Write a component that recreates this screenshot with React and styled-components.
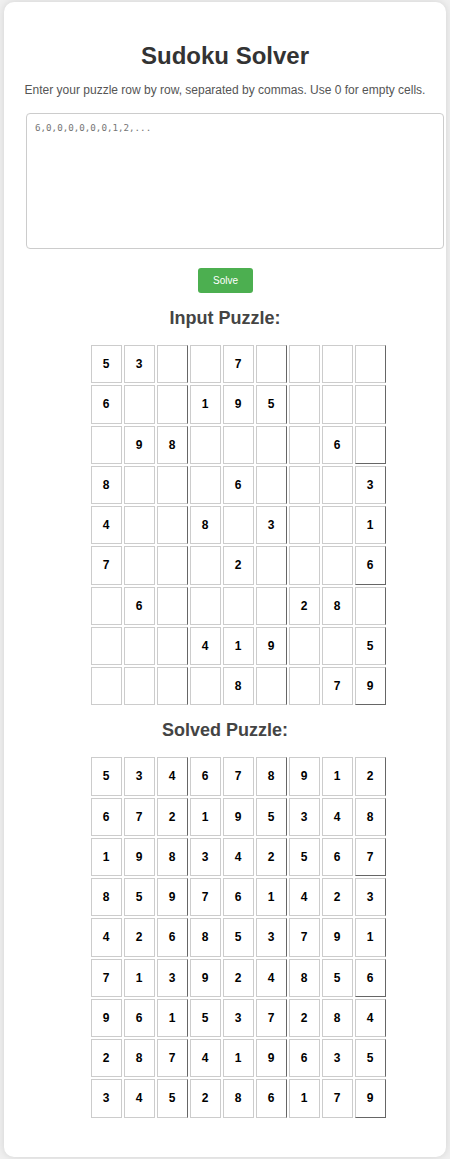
import React from "react";
import styled, { createGlobalStyle } from "styled-components";

const GlobalStyle = createGlobalStyle`
  html, body { margin: 0; padding: 0; }
  body {
    background: #f0f0f0;
    font-family: "Liberation Sans", Arial, sans-serif;
  }
`;

const Page = styled.div`
  padding: 2px 0 3px;
`;

const Card = styled.div`
  box-sizing: border-box;
  width: 442px;
  margin: 0 auto;
  background: #ffffff;
  border-radius: 10px;
  box-shadow: 0 0 8px rgba(0, 0, 0, 0.12);
  padding: 40px 22px 39px;
  display: flex;
  flex-direction: column;
  align-items: center;
`;

const Title = styled.h1`
  margin: 0;
  font-size: 24px;
  line-height: 28px;
  font-weight: 700;
  color: #333333;
  text-align: center;
`;

const Subtitle = styled.p`
  margin: 13px 0 0;
  font-size: 12px;
  line-height: 14px;
  color: #555555;
  text-align: center;
  white-space: nowrap;
`;

const InputArea = styled.textarea`
  align-self: flex-start;
  box-sizing: border-box;
  width: 418px;
  height: 136px;
  margin: 16px 0 0;
  padding: 8px;
  border: 1px solid #cccccc;
  border-radius: 4px;
  resize: none;
  font-family: "DejaVu Sans Mono", "Liberation Mono", monospace;
  font-size: 9.2px;
  line-height: 12px;
  color: #333;
  &::placeholder { color: #757575; }
`;

const SolveButton = styled.button`
  margin: 19px 0 0 1px;
  width: 55px;
  height: 25px;
  border: none;
  border-radius: 3px;
  background: #4caf50;
  color: #ffffff;
  font-family: "Liberation Sans", Arial, sans-serif;
  font-size: 10px;
  cursor: pointer;
`;

const SectionTitle = styled.h2`
  margin: 15px 0 0;
  font-size: 18px;
  line-height: 21px;
  font-weight: 700;
  color: #444444;
  text-align: center;
`;

const Grid = styled.div`
  margin: 16px 0 0 26px;
  display: grid;
  grid-template-columns: repeat(9, 31px);
  grid-auto-rows: 38.25px;
  gap: 2px;
`;

const Cell = styled.div`
  box-sizing: border-box;
  display: flex;
  align-items: center;
  justify-content: center;
  border: 1px solid #cccccc;
  border-right-color: ${(p) => (p.$thickRight ? "#666666" : "#cccccc")};
  border-bottom-color: ${(p) => (p.$thickBottom ? "#666666" : "#cccccc")};
  font-size: 12px;
  font-weight: 700;
  color: #000000;
`;

const input = [
  "530070000",
  "600195000",
  "098000060",
  "800060003",
  "400803001",
  "700020006",
  "060000280",
  "000419005",
  "000080079",
];

const solved = [
  "534678912",
  "672195348",
  "198342567",
  "859761423",
  "426853791",
  "713924856",
  "961537284",
  "287419635",
  "345286179",
];

function Board({ rows }) {
  const cells = [];
  rows.forEach((row, r) => {
    row.split("").forEach((d, c) => {
      const idx = r * 9 + c + 1;
      cells.push(
        <Cell key={idx} $thickRight={idx % 3 === 0} $thickBottom={idx % 27 === 0}>
          {d === "0" ? "" : d}
        </Cell>
      );
    });
  });
  return <Grid>{cells}</Grid>;
}

export default function App() {
  return (
    <>
      <GlobalStyle />
      <Page>
        <Card>
          <Title>Sudoku Solver</Title>
          <Subtitle>
            Enter your puzzle row by row, separated by commas. Use 0 for empty cells.
          </Subtitle>
          <InputArea placeholder="6,0,0,0,0,0,0,1,2,..." />
          <SolveButton>Solve</SolveButton>
          <SectionTitle>Input Puzzle:</SectionTitle>
          <Board rows={input} />
          <SectionTitle>Solved Puzzle:</SectionTitle>
          <Board rows={solved} />
        </Card>
      </Page>
    </>
  );
}
